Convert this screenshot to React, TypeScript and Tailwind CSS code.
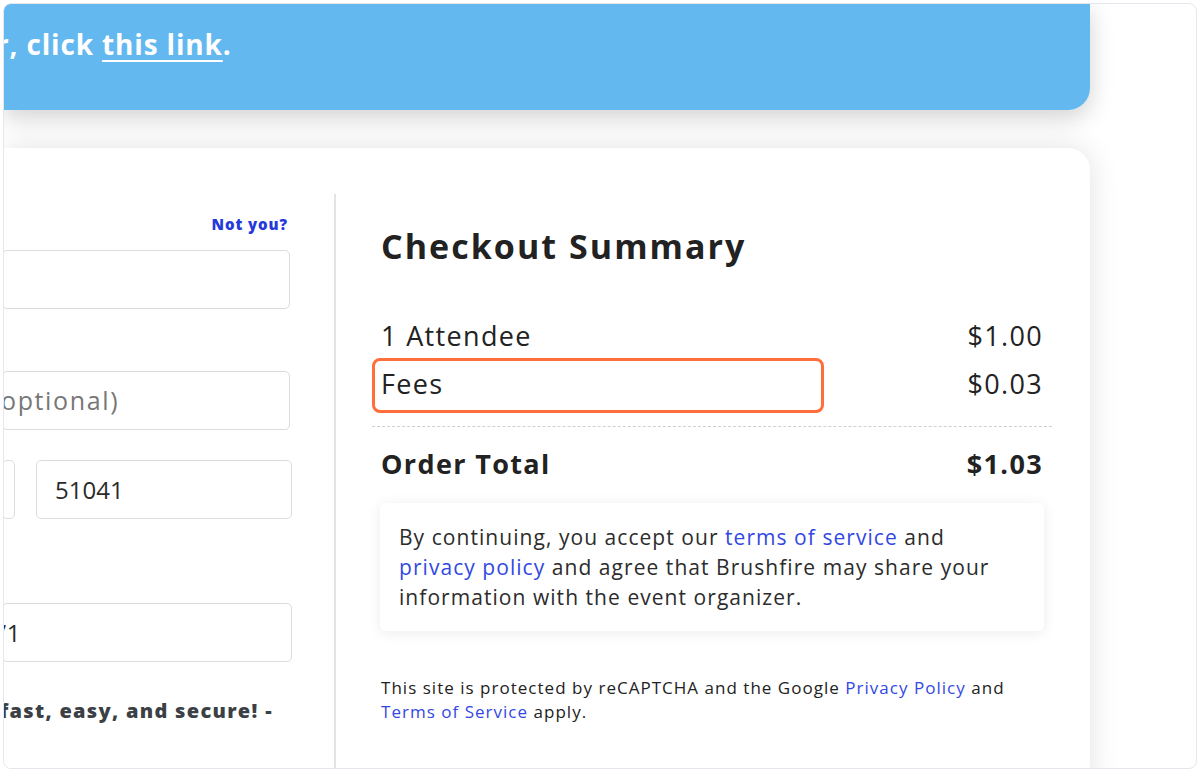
import React from "react";

const font = { fontFamily: '"Open Sans", "Noto Sans", sans-serif' };

const Field = ({ text, muted, className = "" }: { text?: string; muted?: boolean; className?: string }) => (
  <div
    className={`h-[59px] rounded-[5px] border border-[#dcdcdc] bg-white flex items-center text-[24px] whitespace-nowrap ${
      muted ? "text-[#777]" : "text-[#2a2a2a]"
    } ${className}`}
  >
    {text}
  </div>
);

const Row = ({ label, amount, bold }: { label: string; amount: string; bold?: boolean }) => (
  <div
    className={`flex items-center justify-between h-[48px] text-[27px] tracking-[0.05em] text-[#222] ${
      bold ? "font-bold" : ""
    }`}
  >
    <span>{label}</span>
    <span>{amount}</span>
  </div>
);

export default function App() {
  return (
    <div className="w-[1200px] h-[772px] bg-white p-[3px]" style={font}>
      <div className="h-full rounded-[8px] border border-[#e6e6ee] bg-white overflow-hidden">
        <div className="w-[1086px] flex flex-col">
          {/* banner */}
          <div className="relative z-10 h-[107px] -mt-[1px] bg-[#63b8ef] rounded-br-[22px] shadow-[0_8px_24px_rgba(0,0,0,0.18)] pt-[20px]">
            <p className="-ml-[8px] text-[28px] font-bold text-white whitespace-nowrap tracking-[0.03em]">
              r, click <a className="underline underline-offset-[5px] decoration-[2px]">this link</a>.
            </p>
          </div>

          {/* checkout card */}
          <div className="mt-[38px] h-[640px] bg-white rounded-tr-[22px] shadow-[0_0_30px_rgba(0,0,0,0.12)] flex pt-[46px]">
            {/* left form column */}
            <div className="w-[332px] pr-[44px] border-r-2 border-[#e4e4e4] flex flex-col">
              <div className="text-right text-[15px] font-extrabold text-[#2438dc] mt-[20px] leading-[20px] pr-[2px] tracking-[0.06em]">
                Not you?
              </div>
              <Field className="mt-[16px] -ml-[2px]" />
              <Field className="mt-[62px] -ml-[2px]" />
              <div className="-mt-[59px] h-[59px] flex items-center text-[25px] text-[#777] -ml-[12px] whitespace-nowrap tracking-[0.065em]">
                (optional)
              </div>
              <div className="mt-[30px] flex gap-[21px] -ml-[2px]">
                <Field className="w-[13px]" />
                <Field className="flex-1 pl-[18px] -mr-[2px]" text="51041" />
              </div>
              <Field className="mt-[84px] -ml-[2px] -mr-[2px]" />
              <div className="-mt-[59px] h-[59px] flex items-center text-[24px] text-[#2a2a2a] -ml-[11px]">71</div>
              <p className="mt-[34px] -ml-[4px] text-[20px] font-extrabold text-[#3b4045] whitespace-nowrap tracking-[0.065em]">
                fast, easy, and secure! -
              </p>
            </div>

            {/* summary column */}
            <div className="flex-1 pl-[45px] pr-[47px] flex flex-col">
              <h2 className="mt-[30px] text-[34px] font-bold text-[#222] leading-[44px] tracking-[0.06em]">
                Checkout Summary
              </h2>
              <div className="mt-[44px] flex flex-col">
                <Row label="1 Attendee" amount="$1.00" />
                <div className="relative">
                  <Row label="Fees" amount="$0.03" />
                  <div className="absolute left-[-9px] top-[-2px] w-[452px] h-[55px] rounded-[8px] border-[3px] border-[#ff6e3b]" />
                </div>
              </div>
              <div className="mt-[18px] -mx-[9px] border-t border-dashed border-[#d0d0d0]" />
              <div className="mt-[13px]">
                <Row label="Order Total" amount="$1.03" bold />
              </div>
              <div className="mt-[15px] rounded-[6px] bg-white shadow-[0_2px_14px_rgba(0,0,0,0.08)] px-[19px] py-[19px] text-[21px] leading-[30px] text-[#2c2c2c] -mx-[1px] whitespace-nowrap tracking-[0.05em]">
                By continuing, you accept our <a className="text-[#3348e2]">terms of service</a> and
                <br />
                <a className="text-[#3348e2]">privacy policy</a> and agree that Brushfire may share your
                <br />
                information with the event organizer.
              </div>
              <p className="mt-[45px] text-[17px] leading-[24px] text-[#222] whitespace-nowrap tracking-[0.06em]">
                This site is protected by reCAPTCHA and the Google <a className="text-[#3348e2]">Privacy Policy</a> and
                <br />
                <a className="text-[#3348e2]">Terms of Service</a> apply.
              </p>
            </div>
          </div>
        </div>
      </div>
    </div>
  );
}
